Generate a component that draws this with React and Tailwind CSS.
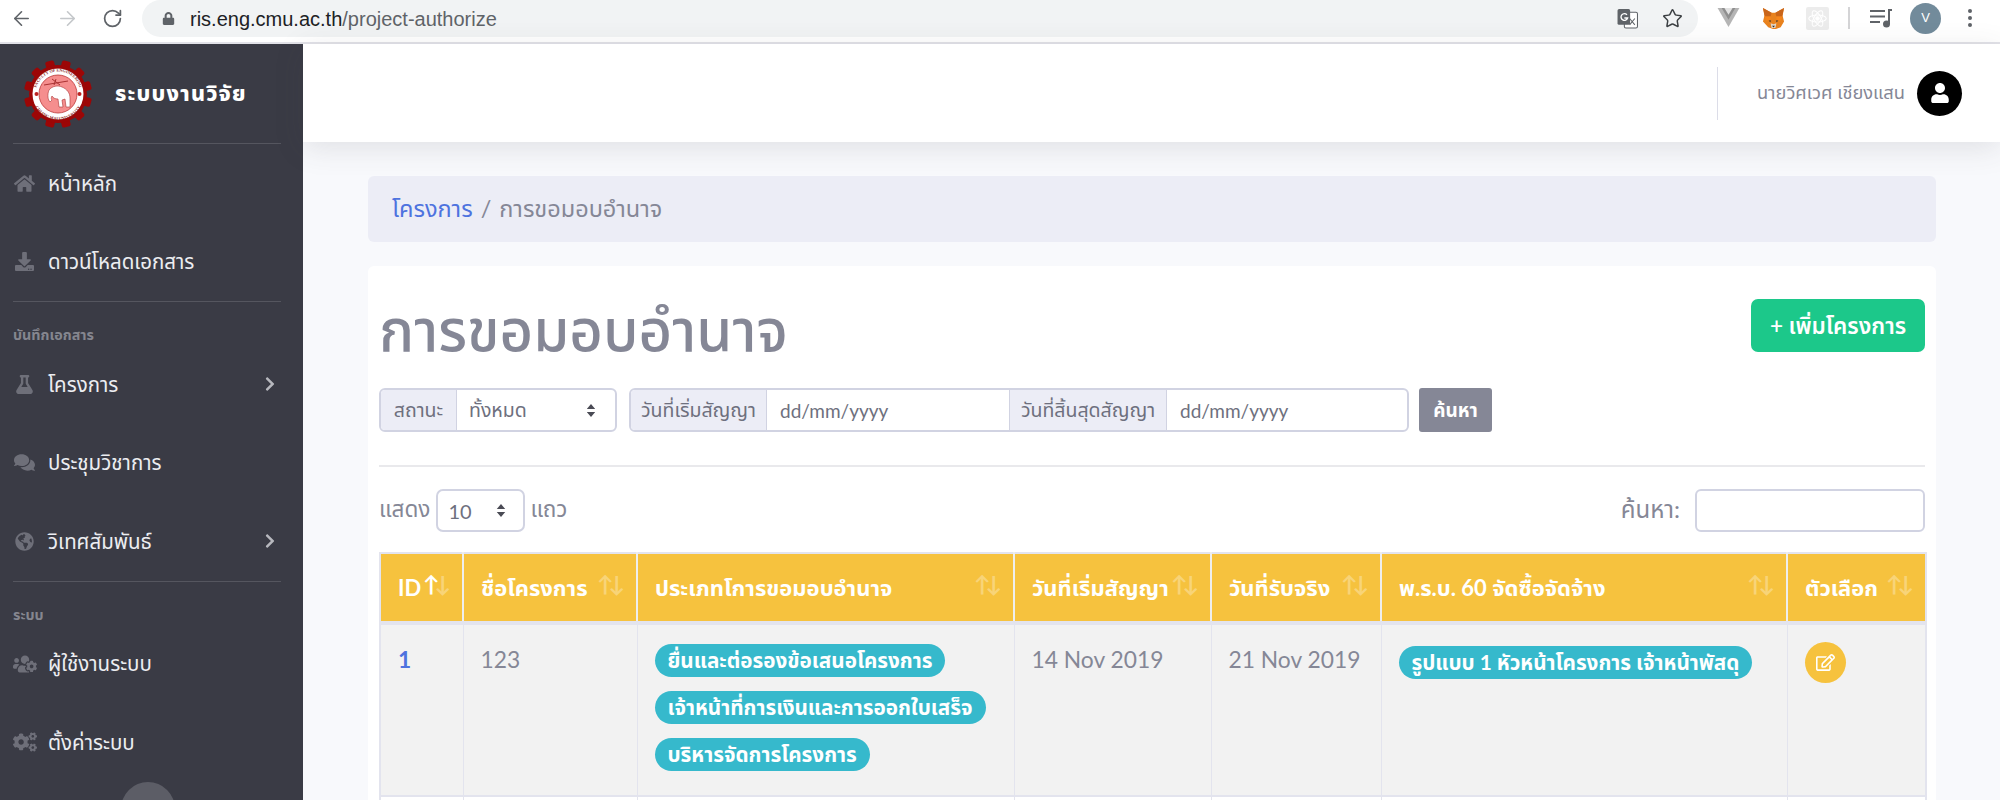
import React from "react";
import { ArrowLeft, ArrowRight, RotateCw, Star } from "lucide-react";
import {
  FaHome, FaDownload, FaFlask, FaComments, FaGlobeAmericas, FaUsersCog, FaCogs,
  FaChevronRight, FaUser, FaLock, FaRegEdit,
} from "react-icons/fa";

const sans = "font-['Lato','Noto_Sans','Noto_Sans_Thai','Liberation_Sans',sans-serif]";

function Gear() {
  const teeth = Array.from({ length: 12 }, (_, i) => i * 30);
  return (
    <svg viewBox="0 0 68 68" className="w-[68px] h-[68px]">
      <defs>
        <path id="logoTop" d="M11.500 34a22.500 22.500 0 0 1 45 0" />
        <path id="logoBottom" d="M8 34a26 26 0 0 0 52 0" />
      </defs>
      {teeth.map((a) => (
        <rect key={a} x="29.5" y="0" width="9" height="10" rx="2" fill="#9c0606" transform={`rotate(${a + 15} 34 34)`} />
      ))}
      <circle cx="34" cy="34" r="29" fill="#9c0606" />
      <circle cx="34" cy="34" r="25.5" fill="#fff" />
      <circle cx="34" cy="34" r="19" fill="#f58e8e" stroke="#b33" strokeWidth="0.8" />
      <text fontSize="4.200" fill="#8c2a2a" fontFamily="'Liberation Serif', serif" fontWeight="700">
        <textPath href="#logoTop" startOffset="50%" textAnchor="middle">FACULTY OF ENGINEERING</textPath>
      </text>
      <text fontSize="4.200" fill="#8c2a2a" fontFamily="'Liberation Serif', serif" fontWeight="700">
        <textPath href="#logoBottom" startOffset="50%" textAnchor="middle">CHIANG MAI UNIVERSITY</textPath>
      </text>
      <path d="M25 30c3-4 9-5 13-3 5 2 8 6 8 11v9h-4l-1-8-3 1 1 7h-4l-1-8c-3 0-5-1-6-3-1 2-1 3 0 4l-2 2c-2-2-3-7-1-12z" fill="#fff" stroke="#a33" strokeWidth="0.6" />
      <path d="M20 25l24-4M28 19l8 6M32 19l-2 6" stroke="#a33" strokeWidth="1" fill="none" />
      <circle cx="12.500" cy="34" r="2" fill="#b22" />
      <circle cx="55.500" cy="34" r="2" fill="#b22" />
    </svg>
  );
}

function Fox() {
  return (
    <svg viewBox="0 0 24 24" className="w-[23px] h-[23px]">
      <path d="M1 1l9 5h4l9-5-1.500 8 1.500 6-3.500 6-5 2h-3l-5-2L1 15l1.500-6z" fill="#e8821e" />
      <path d="M1 1l9 5-1 4-6 0z" fill="#c9651a" />
      <path d="M23 1l-9 5 1 4 6 0z" fill="#c9651a" />
      <path d="M9 17l3 1 3-1-1 5h-4z" fill="#e4d7c8" />
      <path d="M6.500 13l3 1-1 2zM17.500 13l-3 1 1 2z" fill="#2e2e2e" />
      <path d="M10.500 19.500h3l-1.500 2z" fill="#2e2e2e" />
      <path d="M3 10l6 0 0 4-5 0zM21 10l-6 0 0 4 5 0z" fill="#f6851b" />
    </svg>
  );
}

function BrowserBar() {
  return (
    <div className="h-[44px] shrink-0 bg-white border-b-2 border-[#e2e2e8] flex items-start font-['Liberation_Sans',sans-serif]">
      <div className="w-[142px] h-[36px] flex items-center pl-[10px] gap-[23px]">
        <ArrowLeft size={23} className="text-[#5f6368]" strokeWidth={1.7} />
        <ArrowRight size={23} className="text-[#c4c7ca]" strokeWidth={1.7} />
        <RotateCw size={21} className="text-[#5f6368]" strokeWidth={2} />
      </div>
      <div className="w-[1556px] h-[37px] bg-[#f1f3f4] rounded-[19px] flex items-center pl-[20px] pr-[15px]">
        <FaLock size={13} className="text-[#5f6368]" />
        <span className="ml-[15px] text-[20px] text-[#202124]">
          ris.eng.cmu.ac.th<span className="text-[#5f6368]">/project-authorize</span>
        </span>
        <div className="ml-auto flex items-center gap-[24px]">
          <svg viewBox="0 0 20 20" className="w-[21px] h-[21px]">
            <rect x="7" y="4" width="12.500" height="15" rx="1.500" fill="#fff" stroke="#5f6368" />
            <rect x="0.500" y="1" width="12" height="15" rx="1.500" fill="#5f6368" />
            <path d="M9.500 6.500a3.200 3.200 0 1 0 .6 3H7" fill="none" stroke="#fff" strokeWidth="1.300" />
            <path d="M12 10l5 6M17 10l-5 6" stroke="#5f6368" strokeWidth="1" />
          </svg>
          <Star size={21} className="text-[#3c4043]" strokeWidth={1.7} />
        </div>
      </div>
      <div className="flex-1 h-[36px] flex items-center pl-[19px]">
        <svg viewBox="0 0 24 22" className="w-[23px] h-[20px]">
          <path d="M0 0h24L12 21z" fill="#b5b5b5" />
          <path d="M6 0h12l-6 10z" fill="#e2e2e2" />
          <path d="M4.500 0L12 13 19.500 0h-3L12 7.500 7.500 0z" fill="#8f8f8f" />
        </svg>
        <div className="ml-[22px]"><Fox /></div>
        <div className="ml-[21px] w-[23px] h-[23px] bg-[#ececec] rounded-[2px] flex items-center justify-center">
          <svg viewBox="0 0 24 24" className="w-[21px] h-[21px]" fill="none" stroke="#fff" strokeWidth="1.200">
            <ellipse cx="12" cy="12" rx="10" ry="4" />
            <ellipse cx="12" cy="12" rx="10" ry="4" transform="rotate(60 12 12)" />
            <ellipse cx="12" cy="12" rx="10" ry="4" transform="rotate(120 12 12)" />
            <circle cx="12" cy="12" r="2" fill="#fff" />
          </svg>
        </div>
        <div className="ml-[19px] w-[2px] h-[22px] bg-[#d4d4d6]" />
        <svg viewBox="0 0 24 24" className="ml-[19px] w-[24px] h-[24px]" fill="#5f6368">
          <rect x="1" y="4" width="15" height="2" />
          <rect x="1" y="9.500" width="15" height="2" />
          <rect x="1" y="15" width="10" height="2" />
          <rect x="19" y="3" width="2" height="15" />
          <rect x="19" y="3" width="4" height="2" />
          <circle cx="17.500" cy="18" r="3.500" />
        </svg>
        <div className="ml-[17px] w-[31px] h-[31px] rounded-full bg-[#728b9b] text-white text-[13px] flex items-center justify-center">V</div>
        <div className="ml-[27px] flex flex-col gap-[3px]">
          <span className="w-[4px] h-[4px] rounded-full bg-[#5f6368]" />
          <span className="w-[4px] h-[4px] rounded-full bg-[#5f6368]" />
          <span className="w-[4px] h-[4px] rounded-full bg-[#5f6368]" />
        </div>
      </div>
    </div>
  );
}

function NavItem({ icon: Icon, size = 20, label, chevron, iconBox = "pl-[15px]" }) {
  return (
    <div className="h-[78.500px] shrink-0 flex items-center">
      <div className={`w-[48px] shrink-0 text-[#6e6f79] ${iconBox}`}>
        <Icon size={size} />
      </div>
      <span className="text-[20.500px] text-[#ecedf1]">{label}</span>
      {chevron && <FaChevronRight size={16} className="ml-auto mr-[25px] text-[#b7b8be]" />}
    </div>
  );
}

function Sidebar() {
  return (
    <aside className="w-[303px] shrink-0 bg-[#3a3b45] flex flex-col overflow-hidden">
      <div className="h-[99px] shrink-0 flex items-center pl-[24px]">
        <Gear />
        <span className="ml-[23px] text-[21.500px] font-extrabold tracking-[1.200px] text-white">ระบบงานวิจัย</span>
      </div>
      <div className="mx-[13px] w-[268px] h-px bg-[#55565f] shrink-0" />
      <NavItem icon={FaHome} label="หน้าหลัก" size={21} iconBox="pl-[14px]" />
      <NavItem icon={FaDownload} label="ดาวน์โหลดเอกสาร" size={19} iconBox="pl-[15px]" />
      <div className="mx-[13px] w-[268px] h-px bg-[#55565f] shrink-0" />
      <div className="h-[43px] shrink-0 pl-[13px] pt-[23px] text-[14.300px] leading-[19px] font-bold text-[#85868f]">บันทึกเอกสาร</div>
      <NavItem icon={FaFlask} label="โครงการ" size={19} iconBox="pl-[15px]" chevron />
      <NavItem icon={FaComments} label="ประชุมวิชาการ" size={21} iconBox="pl-[14px]" />
      <NavItem icon={FaGlobeAmericas} label="วิเทศสัมพันธ์" size={19} iconBox="pl-[15px]" chevron />
      <div className="mx-[13px] w-[268px] h-px bg-[#55565f] shrink-0" />
      <div className="h-[43px] shrink-0 pl-[13px] pt-[23px] text-[14.300px] leading-[19px] font-bold text-[#85868f]">ระบบ</div>
      <NavItem icon={FaUsersCog} label="ผู้ใช้งานระบบ" size={24} iconBox="pl-[13px]" />
      <NavItem icon={FaCogs} label="ตั้งค่าระบบ" size={24} iconBox="pl-[13px]" />
      <div className="ml-[121px] w-[54px] h-[54px] rounded-full bg-[#5c5d66] shrink-0" />
    </aside>
  );
}

function Addon({ children, className = "" }) {
  return (
    <span className={`h-full flex items-center justify-center bg-[#ecedf6] border-[#d1d3e2] text-[#6e707e] text-[19.500px] whitespace-nowrap ${className}`}>
      {children}
    </span>
  );
}

function UpDown() {
  return (
    <svg viewBox="0 0 10 16" className="w-[12px] h-[15px]" fill="#4a4b55">
      <path d="M5 1l4.500 5.500h-9zM5 15l4.500-5.500h-9z" />
    </svg>
  );
}

function Badge({ children }) {
  return (
    <span className="inline-flex items-center h-[33px] rounded-full bg-[#36b9cc] text-white font-bold text-[20.700px] px-[13px] whitespace-nowrap">
      {children}
    </span>
  );
}

function Th({ children, active }) {
  return (
    <th className="bg-[#f6c23e] border-r-2 border-[#eee] last:border-r-0 h-[70px] p-0 font-bold text-white text-[22px] text-left">
      <div className="flex items-center justify-between pl-[17px] pr-[11px] whitespace-nowrap">
        <span>{children}</span>
        <span className="text-[22px] leading-none mb-[8px] tracking-[-5px] pr-[5px]">
          <span className={active ? "" : "opacity-30"}>↑</span>
          <span className="opacity-30">↓</span>
        </span>
      </div>
    </th>
  );
}

export default function App() {
  return (
    <div className={`w-[2000px] h-[800px] overflow-hidden flex flex-col bg-[#f8f9fc] text-[#858796] ${sans}`}>
      <BrowserBar />
      <div className="flex-1 flex min-h-0">
        <Sidebar />
        <main className="flex-1 flex flex-col min-w-0">
          <header className="h-[98px] shrink-0 bg-white shadow-[0_6px_28px_rgba(58,59,69,0.13)] flex items-center justify-end pr-[38px]">
            <div className="w-px h-[53px] bg-[#dcdde8]" />
            <span className="ml-[39px] text-[#858796] text-[18.300px]">นายวิศเวศ เชียงแสน</span>
            <div className="ml-[12px] w-[45px] h-[45px] rounded-full bg-black flex items-center justify-center text-white">
              <FaUser size={20} />
            </div>
          </header>
          <div className="pt-[34px] pl-[65px] pr-[64px] flex-1 min-h-0">
            <div className="h-[66px] rounded-[6px] bg-[#ecedf6] flex items-center pl-[24px] text-[23.500px]">
              <span className="text-[#4e73df]">โครงการ</span>
              <span className="mx-[8px] text-[#858796]">/</span>
              <span className="text-[#858796]">การขอมอบอำนาจ</span>
            </div>
            <section className="mt-[24px] bg-white rounded-[6px] px-[11px] pt-[33px] h-[600px]">
              <div className="flex items-center justify-between h-[53px]">
                <h1 className="pt-[5px] text-[58px] leading-[53px] font-medium text-[#858796]">การขอมอบอำนาจ</h1>
                <button className="w-[174px] h-[53px] rounded-[7px] bg-[#1cc88a] text-white font-semibold text-[22.500px]">+ เพิ่มโครงการ</button>
              </div>
              <div className="flex items-center h-[44px] mt-[36px]">
                <div className="flex items-center w-[238px] h-full border-2 border-[#d1d3e2] rounded-[6px] overflow-hidden">
                  <Addon className="w-[76px] border-r">สถานะ</Addon>
                  <span className="flex-1 flex items-center justify-between pl-[12px] pr-[18px] text-[19.500px] text-[#6e707e]">ทั้งหมด<UpDown /></span>
                </div>
                <div className="ml-[12px] flex items-center w-[780px] h-full border-2 border-[#d1d3e2] rounded-[6px] overflow-hidden">
                  <Addon className="w-[136px] border-r">วันที่เริ่มสัญญา</Addon>
                  <input readOnly placeholder="dd/mm/yyyy" className="w-[242px] h-full pl-[13px] text-[19px] outline-none placeholder:text-[#6e707e]" />
                  <Addon className="w-[158px] border-x">วันที่สิ้นสุดสัญญา</Addon>
                  <input readOnly placeholder="dd/mm/yyyy" className="flex-1 min-w-0 h-full pl-[13px] text-[19px] outline-none placeholder:text-[#6e707e]" />
                </div>
                <button className="ml-[10px] w-[73px] h-full rounded-[3px] bg-[#858796] text-white font-bold text-[19px]">ค้นหา</button>
              </div>
              <div className="mt-[33px] h-[2px] bg-[#e9e9ec]" />
              <div className="mt-[22px] h-[43px] flex items-center justify-between text-[22.500px]">
                <div className="flex items-center h-full">
                  <span className="mb-[3px]">แสดง</span>
                  <span className="ml-[6px] w-[89px] h-full border-2 border-[#d1d3e2] rounded-[7px] flex items-center justify-between pl-[10px] pr-[16px] text-[#6e707e] text-[20px]">10<UpDown /></span>
                  <span className="ml-[5px] mb-[3px]">แถว</span>
                </div>
                <div className="flex items-center h-full">
                  <span className="mb-[3px] text-[24px]">ค้นหา:</span>
                  <input readOnly className="ml-[15px] w-[230px] h-full border-2 border-[#d1d3e2] rounded-[6px] outline-none" />
                </div>
              </div>
              <table className="mt-[20px] w-[1546px] table-fixed border-collapse border-2 border-[#e3e4ee] border-b-0 text-[22.800px]">
                <colgroup>
                  <col className="w-[83px]" />
                  <col className="w-[174px]" />
                  <col className="w-[377px]" />
                  <col className="w-[197px]" />
                  <col className="w-[170px]" />
                  <col className="w-[406px]" />
                  <col className="w-[139px]" />
                </colgroup>
                <thead>
                  <tr className="border-t border-[#e3e4ee] border-b-[4px]">
                    <Th active>ID</Th>
                    <Th>ชื่อโครงการ</Th>
                    <Th>ประเภทโการขอมอบอำนาจ</Th>
                    <Th>วันที่เริ่มสัญญา</Th>
                    <Th>วันที่รับจริง</Th>
                    <Th>พ.ร.บ. 60 จัดซื้อจัดจ้าง</Th>
                    <Th>ตัวเลือก</Th>
                  </tr>
                </thead>
                <tbody>
                  <tr className="h-[173px] bg-[#f2f2f2] border-b-2 border-[#e3e4ee] align-top">
                    <td className="border-r border-[#e3e4ee] pl-[17px] pt-[17px] font-bold text-[#4e73df]">1</td>
                    <td className="border-r border-[#e3e4ee] pl-[17px] pt-[17px]">123</td>
                    <td className="border-r border-[#e3e4ee] pl-[17px] pt-[19px]">
                      <div className="flex flex-col items-start gap-[14px]">
                        <Badge>ยื่นและต่อรองข้อเสนอโครงการ</Badge>
                        <Badge>เจ้าหน้าที่การเงินและการออกใบเสร็จ</Badge>
                        <Badge>บริหารจัดการโครงการ</Badge>
                      </div>
                    </td>
                    <td className="border-r border-[#e3e4ee] pl-[17px] pt-[17px]">14 Nov 2019</td>
                    <td className="border-r border-[#e3e4ee] pl-[17px] pt-[17px]">21 Nov 2019</td>
                    <td className="border-r border-[#e3e4ee] pl-[17px] pt-[19px]">
                      <Badge>รูปแบบ 1 หัวหน้าโครงการ เจ้าหน้าพัสดุ</Badge>
                    </td>
                    <td className="pl-[17px] pt-[17px]">
                      <span className="w-[41px] h-[41px] rounded-full bg-[#f6c23e] text-white flex items-center justify-center">
                        <FaRegEdit size={19} />
                      </span>
                    </td>
                  </tr>
                  <tr className="h-[30px] bg-white">
                    <td className="border-r border-[#e3e4ee]" />
                    <td className="border-r border-[#e3e4ee]" />
                    <td className="border-r border-[#e3e4ee]" />
                    <td className="border-r border-[#e3e4ee]" />
                    <td className="border-r border-[#e3e4ee]" />
                    <td className="border-r border-[#e3e4ee]" />
                    <td />
                  </tr>
                </tbody>
              </table>
            </section>
          </div>
        </main>
      </div>
    </div>
  );
}
